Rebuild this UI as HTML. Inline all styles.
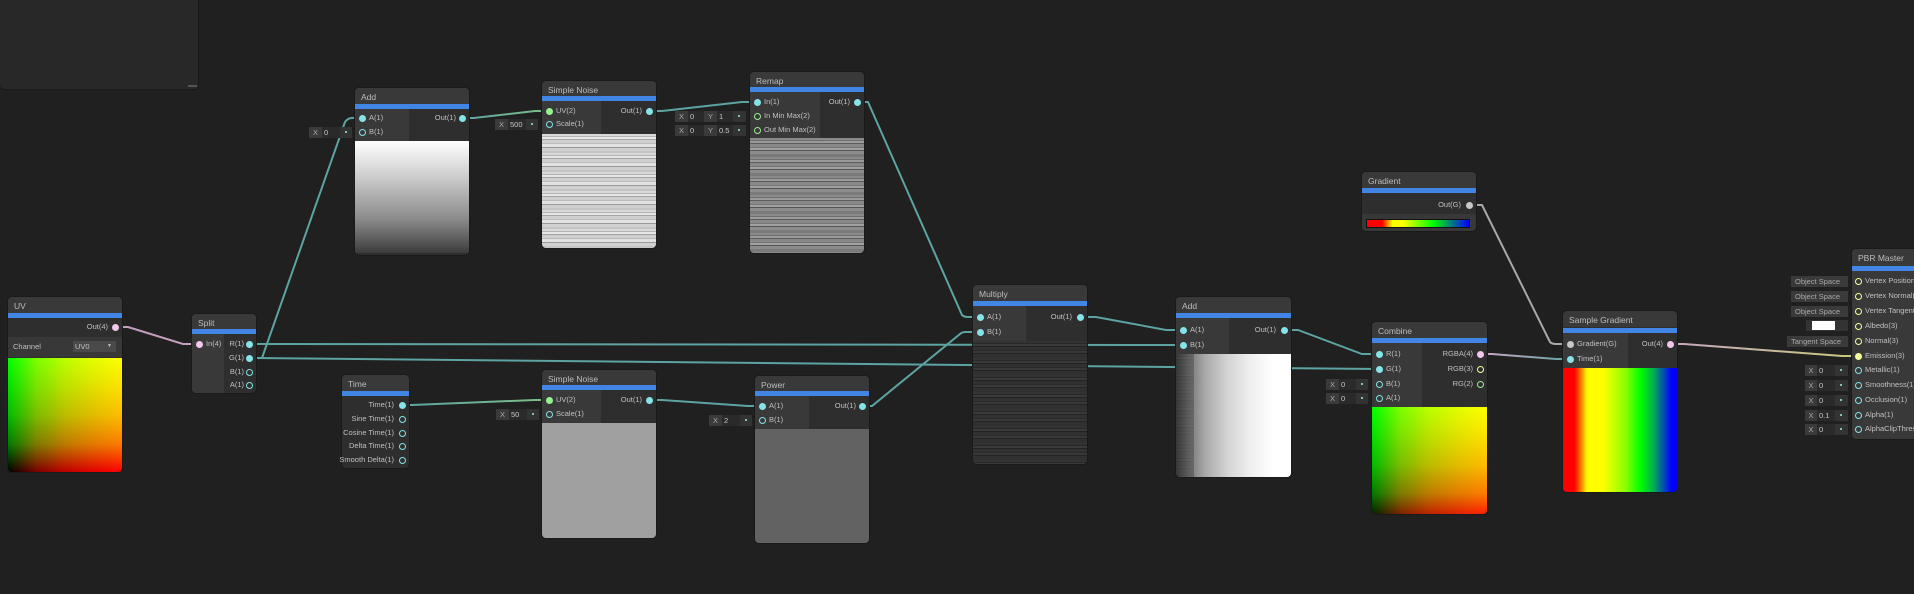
<!DOCTYPE html>
<html><head><meta charset="utf-8"><style>
*{margin:0;padding:0;box-sizing:border-box}
body{width:1914px;height:594px;background:#202020;overflow:hidden;position:relative;font-family:"Liberation Sans",sans-serif;color:#c2c2c2}
.a{position:absolute}
.n{position:absolute;background:#2e2e2e;border-radius:4px;overflow:hidden;box-shadow:0 0 0 1px #1a1a1a}
.h{position:absolute;left:0;right:0;top:0;height:16px;background:#393939;font-size:8.5px;line-height:19px;padding-left:6px;color:#bdbdbd}
.b{position:absolute;left:0;right:0;height:5px;background:#4186e4}
.in{position:absolute;left:0;background:#393939}
.t{position:absolute;font-size:7.5px;line-height:10px;white-space:nowrap;color:#c0c0c0}
.r{text-align:right}
.d{position:absolute;width:7px;height:7px;border-radius:50%}
.ring{background:transparent!important;border:1.6px solid}
.fld{position:absolute;height:11px;background:#2a2a2a;font-size:7.5px;line-height:11px;color:#c8c8c8}
.fx{position:absolute;top:0;height:11px;background:#3a3a3a;text-align:center;color:#aaa}
.fd{position:absolute;top:0;height:11px;background:#333}
.fd:after{content:"";position:absolute;left:5px;top:4px;width:2px;height:2px;border-radius:1px;background:#9ee}
.ns1{background:repeating-linear-gradient(180deg,#d8d8d8 0 2px,#b4b4b4 2px 3px,#e6e6e6 3px 5px,#a4a4a4 5px 6px,#cfcfcf 6px 9px,#bcbcbc 9px 10px,#e2e2e2 10px 13px,#989898 13px 14px,#d0d0d0 14px 17px,#c4c4c4 17px 19px)}
.ns2{background:repeating-linear-gradient(180deg,#8a8a8a 0 2px,#6e6e6e 2px 3px,#9a9a9a 3px 5px,#5c5c5c 5px 6px,#888 6px 9px,#767676 9px 10px,#a0a0a0 10px 12px,#545454 12px 13px,#8c8c8c 13px 16px,#7a7a7a 16px 19px)}
.ns3{background:repeating-linear-gradient(180deg,#333 0 2px,#282828 2px 3px,#3a3a3a 3px 5px,#222 5px 6px,#313131 6px 9px,#2a2a2a 9px 10px,#383838 10px 12px,#242424 12px 13px,#303030 13px 17px)}
.uv{background:linear-gradient(to right,#000,#7c0000 25%,#bc0000 50%,#e10000 75%,#f00),linear-gradient(#00ff00,#00e100 25%,#00bc00 50%,#007c00 75%,#000);background-blend-mode:screen}
</style></head><body>

<div class="a" style="left:0;top:-5px;width:198px;height:94px;background:#282828;border-radius:4px;box-shadow:0 0 0 1px #1a1a1a"></div>
<div class="a" style="left:188px;top:85px;width:9px;height:2px;background:#555"></div>

<svg class="a" style="left:0;top:0" width="1914" height="594" fill="none" stroke-width="2">
<defs>
<linearGradient id="pt" x1="0" x2="1"><stop offset="0" stop-color="#d0a6c8"/><stop offset="1" stop-color="#5ea3a3"/></linearGradient>
<linearGradient id="py" x1="0" x2="1"><stop offset="0" stop-color="#c8a6c0"/><stop offset="1" stop-color="#c9c97a"/></linearGradient>
<linearGradient id="tg" x1="0" x2="1"><stop offset="0" stop-color="#5ea3a3"/><stop offset="1" stop-color="#7cbf84"/></linearGradient>
</defs>
<path d="M115,327 H128 L183,344 H199" stroke="#c49ebd"/>
<path d="M249,358 H262 L345,122 Q348,118 352,118 H362" stroke="#5ea3a3"/>
<path d="M249,344 L1183,345" stroke="#5ea3a3"/>
<path d="M249,358 L1379,369" stroke="#5ea3a3"/>
<path d="M462,118 H474 L535,111 H549" stroke="url(#tg)"/>
<path d="M649,111 H662 L742,102 H757" stroke="#5ea3a3"/>
<path d="M857,102 H868 L962,315 Q964,317 968,317 H980" stroke="#5ea3a3"/>
<path d="M402,405 H412 L535,400 H549" stroke="url(#tg)"/>
<path d="M649,400 H662 L748,406 H762" stroke="#5ea3a3"/>
<path d="M862,406 H872 L960,334 Q962,332 966,332 H980" stroke="#5ea3a3"/>
<path d="M1080,317 H1096 L1166,330 H1183" stroke="#5ea3a3"/>
<path d="M1284,330 H1298 L1362,354 H1379" stroke="#5ea3a3"/>
<path d="M1480,354 H1492 L1556,359 H1570" stroke="url(#pt)"/>
<path d="M1469,205 H1482 L1550,342 Q1552,344 1556,344 H1570" stroke="#a8a8a8"/>
<path d="M1670,344 H1684 L1842,356 H1858" stroke="url(#py)"/>
</svg>

<!-- UV -->
<div class="n" style="left:8px;top:297px;width:114px;height:175px">
<div class="h">UV</div><div class="b" style="top:16px"></div>
<div class="in" style="top:40px;width:114px;height:20px;background:#383838"></div>
<div class="a uv" style="left:0;top:61px;width:114px;height:114px"></div>
</div>
<div class="t r" style="left:60px;top:322px;width:48px">Out(4)</div>
<div class="d" style="left:112px;top:324px;background:#f4c6ee"></div>
<div class="t" style="left:13px;top:342px">Channel</div>
<div class="a" style="left:73px;top:341px;width:43px;height:11px;background:#4a4a4a;font-size:7.5px;line-height:11px;padding-left:2px">UV0<span style="position:absolute;right:4px;font-size:5px">▼</span></div>

<!-- Split -->
<div class="n" style="left:192px;top:314px;width:64px;height:79px">
<div class="h">Split</div><div class="b" style="top:15px"></div>
<div class="in" style="top:20px;width:32px;height:59px"></div>
</div>
<div class="d" style="left:196px;top:341px;background:#f4c6ee"></div>
<div class="t" style="left:206px;top:339px">In(4)</div>
<div class="t r" style="left:220px;top:339px;width:24px">R(1)</div>
<div class="t r" style="left:220px;top:353px;width:24px">G(1)</div>
<div class="t r" style="left:220px;top:367px;width:24px">B(1)</div>
<div class="t r" style="left:220px;top:380px;width:24px">A(1)</div>
<div class="d" style="left:246px;top:341px;background:#84e4e7"></div>
<div class="d" style="left:246px;top:355px;background:#84e4e7"></div>
<div class="d ring" style="left:246px;top:369px;border-color:#84e4e7"></div>
<div class="d ring" style="left:246px;top:382px;border-color:#84e4e7"></div>

<!-- Add1 -->
<div class="n" style="left:355px;top:88px;width:114px;height:167px">
<div class="h">Add</div><div class="b" style="top:16px"></div>
<div class="in" style="top:21px;width:54px;height:32px"></div>
<div class="a" style="left:0;top:53px;width:114px;height:112px;background:linear-gradient(#fff,#d0d0d0 30%,#8a8a8a 70%,#3c3c3c)"></div>
</div>
<div class="d" style="left:359px;top:115px;background:#84e4e7"></div>
<div class="d ring" style="left:359px;top:129px;border-color:#84e4e7"></div>
<div class="t" style="left:369px;top:113px">A(1)</div>
<div class="t" style="left:369px;top:127px">B(1)</div>
<div class="t r" style="left:420px;top:113px;width:36px">Out(1)</div>
<div class="d" style="left:459px;top:115px;background:#84e4e7"></div>
<div class="fld" style="left:309px;top:127px;width:43px"><div class="fx" style="left:0;width:13px">X</div><span style="position:absolute;left:15px">0</span><div class="fd" style="left:31px;width:12px"></div></div>

<!-- Simple Noise 1 -->
<div class="n" style="left:542px;top:81px;width:114px;height:167px">
<div class="h">Simple Noise</div><div class="b" style="top:15px"></div>
<div class="in" style="top:20px;width:59px;height:33px"></div>
<div class="a ns1" style="left:0;top:53px;width:114px;height:114px"></div>
</div>
<div class="d" style="left:546px;top:108px;background:#9aef92"></div>
<div class="d ring" style="left:546px;top:121px;border-color:#84e4e7"></div>
<div class="t" style="left:556px;top:106px">UV(2)</div>
<div class="t" style="left:556px;top:119px">Scale(1)</div>
<div class="t r" style="left:606px;top:106px;width:36px">Out(1)</div>
<div class="d" style="left:646px;top:108px;background:#84e4e7"></div>
<div class="fld" style="left:495px;top:119px;width:43px"><div class="fx" style="left:0;width:13px">X</div><span style="position:absolute;left:15px">500</span><div class="fd" style="left:31px;width:12px"></div></div>

<!-- Remap -->
<div class="n" style="left:750px;top:72px;width:114px;height:181px">
<div class="h">Remap</div><div class="b" style="top:15px"></div>
<div class="in" style="top:20px;width:70px;height:46px"></div>
<div class="a ns2" style="left:0;top:66px;width:114px;height:115px"></div>
</div>
<div class="d" style="left:754px;top:99px;background:#84e4e7"></div>
<div class="d ring" style="left:754px;top:113px;border-color:#9aef92"></div>
<div class="d ring" style="left:754px;top:127px;border-color:#9aef92"></div>
<div class="t" style="left:764px;top:97px">In(1)</div>
<div class="t" style="left:764px;top:111px">In Min Max(2)</div>
<div class="t" style="left:764px;top:125px">Out Min Max(2)</div>
<div class="t r" style="left:814px;top:97px;width:36px">Out(1)</div>
<div class="d" style="left:854px;top:99px;background:#84e4e7"></div>
<div class="fld" style="left:675px;top:111px;width:71px"><div class="fx" style="left:0;width:13px">X</div><span style="position:absolute;left:15px">0</span><div class="fx" style="left:29px;width:13px">Y</div><span style="position:absolute;left:44px">1</span><div class="fd" style="left:58px;width:13px"></div></div>
<div class="fld" style="left:675px;top:125px;width:71px"><div class="fx" style="left:0;width:13px">X</div><span style="position:absolute;left:15px">0</span><div class="fx" style="left:29px;width:13px">Y</div><span style="position:absolute;left:44px">0.5</span><div class="fd" style="left:58px;width:13px"></div></div>

<!-- Time -->
<div class="n" style="left:342px;top:375px;width:67px;height:93px">
<div class="h">Time</div><div class="b" style="top:16px"></div>
</div>
<div class="t r" style="left:326px;top:400px;width:68px">Time(1)</div>
<div class="t r" style="left:326px;top:414px;width:68px">Sine Time(1)</div>
<div class="t r" style="left:326px;top:428px;width:68px">Cosine Time(1)</div>
<div class="t r" style="left:326px;top:441px;width:68px">Delta Time(1)</div>
<div class="t r" style="left:326px;top:455px;width:68px">Smooth Delta(1)</div>
<div class="d" style="left:399px;top:402px;background:#84e4e7"></div>
<div class="d ring" style="left:399px;top:416px;border-color:#84e4e7"></div>
<div class="d ring" style="left:399px;top:430px;border-color:#84e4e7"></div>
<div class="d ring" style="left:399px;top:443px;border-color:#84e4e7"></div>
<div class="d ring" style="left:399px;top:457px;border-color:#84e4e7"></div>

<!-- Simple Noise 2 -->
<div class="n" style="left:542px;top:370px;width:114px;height:168px">
<div class="h">Simple Noise</div><div class="b" style="top:15px"></div>
<div class="in" style="top:20px;width:59px;height:33px"></div>
<div class="a" style="left:0;top:53px;width:114px;height:115px;background:#a0a0a0"></div>
</div>
<div class="d" style="left:546px;top:397px;background:#9aef92"></div>
<div class="d ring" style="left:546px;top:411px;border-color:#84e4e7"></div>
<div class="t" style="left:556px;top:395px">UV(2)</div>
<div class="t" style="left:556px;top:409px">Scale(1)</div>
<div class="t r" style="left:606px;top:395px;width:36px">Out(1)</div>
<div class="d" style="left:646px;top:397px;background:#84e4e7"></div>
<div class="fld" style="left:496px;top:409px;width:43px"><div class="fx" style="left:0;width:13px">X</div><span style="position:absolute;left:15px">50</span><div class="fd" style="left:31px;width:12px"></div></div>

<!-- Power -->
<div class="n" style="left:755px;top:376px;width:114px;height:167px">
<div class="h">Power</div><div class="b" style="top:15px"></div>
<div class="in" style="top:20px;width:54px;height:33px"></div>
<div class="a" style="left:0;top:53px;width:114px;height:114px;background:#626262"></div>
</div>
<div class="d" style="left:759px;top:403px;background:#84e4e7"></div>
<div class="d ring" style="left:759px;top:417px;border-color:#84e4e7"></div>
<div class="t" style="left:769px;top:401px">A(1)</div>
<div class="t" style="left:769px;top:415px">B(1)</div>
<div class="t r" style="left:820px;top:401px;width:36px">Out(1)</div>
<div class="d" style="left:859px;top:403px;background:#84e4e7"></div>
<div class="fld" style="left:709px;top:415px;width:43px"><div class="fx" style="left:0;width:13px">X</div><span style="position:absolute;left:15px">2</span><div class="fd" style="left:31px;width:12px"></div></div>

<!-- Multiply -->
<div class="n" style="left:973px;top:285px;width:114px;height:179px">
<div class="h">Multiply</div><div class="b" style="top:16px"></div>
<div class="in" style="top:21px;width:53px;height:35px"></div>
<div class="a ns3" style="left:0;top:56px;width:114px;height:123px"></div>
</div>
<div class="d" style="left:977px;top:314px;background:#84e4e7"></div>
<div class="d" style="left:977px;top:329px;background:#84e4e7"></div>
<div class="t" style="left:987px;top:312px">A(1)</div>
<div class="t" style="left:987px;top:327px">B(1)</div>
<div class="t r" style="left:1036px;top:312px;width:36px">Out(1)</div>
<div class="d" style="left:1077px;top:314px;background:#84e4e7"></div>

<!-- Add2 -->
<div class="n" style="left:1176px;top:297px;width:115px;height:180px">
<div class="h">Add</div><div class="b" style="top:16px"></div>
<div class="in" style="top:21px;width:53px;height:36px"></div>
<div class="a" style="left:0;top:57px;width:115px;height:123px;background:linear-gradient(to right,#3a3a3a,#707070 10%,#a8a8a8 25%,#d4d4d4 45%,#efefef 65%,#fff 85%)"></div>
<div class="a ns3" style="left:0;top:57px;width:18px;height:123px;opacity:.35"></div>
</div>
<div class="d" style="left:1180px;top:327px;background:#84e4e7"></div>
<div class="d" style="left:1180px;top:342px;background:#84e4e7"></div>
<div class="t" style="left:1190px;top:325px">A(1)</div>
<div class="t" style="left:1190px;top:340px">B(1)</div>
<div class="t r" style="left:1240px;top:325px;width:36px">Out(1)</div>
<div class="d" style="left:1281px;top:327px;background:#84e4e7"></div>

<!-- Combine -->
<div class="n" style="left:1372px;top:322px;width:115px;height:192px">
<div class="h">Combine</div><div class="b" style="top:16px"></div>
<div class="in" style="top:21px;width:50px;height:64px"></div>
<div class="a uv" style="left:0;top:85px;width:115px;height:115px"></div>
</div>
<div class="d" style="left:1376px;top:351px;background:#84e4e7"></div>
<div class="d" style="left:1376px;top:366px;background:#84e4e7"></div>
<div class="d ring" style="left:1376px;top:381px;border-color:#84e4e7"></div>
<div class="d ring" style="left:1376px;top:395px;border-color:#84e4e7"></div>
<div class="t" style="left:1386px;top:349px">R(1)</div>
<div class="t" style="left:1386px;top:364px">G(1)</div>
<div class="t" style="left:1386px;top:379px">B(1)</div>
<div class="t" style="left:1386px;top:393px">A(1)</div>
<div class="t r" style="left:1430px;top:349px;width:43px">RGBA(4)</div>
<div class="t r" style="left:1430px;top:364px;width:43px">RGB(3)</div>
<div class="t r" style="left:1430px;top:379px;width:43px">RG(2)</div>
<div class="d" style="left:1477px;top:351px;background:#f4c6ee"></div>
<div class="d ring" style="left:1477px;top:366px;border-color:#f6ff9a"></div>
<div class="d ring" style="left:1477px;top:381px;border-color:#9aef92"></div>
<div class="fld" style="left:1326px;top:379px;width:42px"><div class="fx" style="left:0;width:13px">X</div><span style="position:absolute;left:15px">0</span><div class="fd" style="left:30px;width:12px"></div></div>
<div class="fld" style="left:1326px;top:393px;width:42px"><div class="fx" style="left:0;width:13px">X</div><span style="position:absolute;left:15px">0</span><div class="fd" style="left:30px;width:12px"></div></div>

<!-- Gradient -->
<div class="n" style="left:1362px;top:172px;width:114px;height:59px">
<div class="h">Gradient</div><div class="b" style="top:16px"></div>
<div class="in" style="top:42px;width:114px;height:17px;background:#383838"></div>
<div class="a" style="left:4px;top:47px;width:104px;height:9px;border:1px solid #111;background:linear-gradient(to right,#f00 0,#f00 15%,#ff0 25%,#ff0 35%,#0f0 65%,#00f 100%)"></div>
</div>
<div class="t r" style="left:1420px;top:200px;width:41px">Out(G)</div>
<div class="d" style="left:1466px;top:202px;background:#c8c8c8"></div>

<!-- Sample Gradient -->
<div class="n" style="left:1563px;top:311px;width:114px;height:181px">
<div class="h">Sample Gradient</div><div class="b" style="top:17px"></div>
<div class="in" style="top:22px;width:65px;height:35px"></div>
<div class="a" style="left:0;top:57px;width:114px;height:124px;background:linear-gradient(to right,#f00 0,#f00 10%,#ff8000 16%,#ff0 21%,#ff0 35%,#8f0 55%,#0f0 68%,#0a5 80%,#00f 95%,#00f)"></div>
</div>
<div class="d" style="left:1567px;top:341px;background:#c8c8c8"></div>
<div class="d" style="left:1567px;top:356px;background:#84e4e7"></div>
<div class="t" style="left:1577px;top:339px">Gradient(G)</div>
<div class="t" style="left:1577px;top:354px">Time(1)</div>
<div class="t r" style="left:1620px;top:339px;width:43px">Out(4)</div>
<div class="d" style="left:1667px;top:341px;background:#f4c6ee"></div>

<!-- PBR Master -->
<div class="n" style="left:1852px;top:249px;width:80px;height:190px;background:#393939">
<div class="h" style="height:17px">PBR Master</div><div class="b" style="top:17px"></div>
</div>
<div class="t" style="left:1865px;top:276px">Vertex Position(3)</div>
<div class="t" style="left:1865px;top:291px">Vertex Normal(3)</div>
<div class="t" style="left:1865px;top:306px">Vertex Tangent(3)</div>
<div class="t" style="left:1865px;top:321px">Albedo(3)</div>
<div class="t" style="left:1865px;top:336px">Normal(3)</div>
<div class="t" style="left:1865px;top:351px">Emission(3)</div>
<div class="t" style="left:1865px;top:365px">Metallic(1)</div>
<div class="t" style="left:1865px;top:380px">Smoothness(1)</div>
<div class="t" style="left:1865px;top:395px">Occlusion(1)</div>
<div class="t" style="left:1865px;top:410px">Alpha(1)</div>
<div class="t" style="left:1865px;top:424px">AlphaClipThreshold(1)</div>
<div class="d ring" style="left:1855px;top:278px;border-color:#f6ff9a"></div>
<div class="d ring" style="left:1855px;top:293px;border-color:#f6ff9a"></div>
<div class="d ring" style="left:1855px;top:308px;border-color:#f6ff9a"></div>
<div class="d ring" style="left:1855px;top:323px;border-color:#f6ff9a"></div>
<div class="d ring" style="left:1855px;top:338px;border-color:#f6ff9a"></div>
<div class="d" style="left:1855px;top:353px;background:#f6ff9a"></div>
<div class="d ring" style="left:1855px;top:367px;border-color:#84e4e7"></div>
<div class="d ring" style="left:1855px;top:382px;border-color:#84e4e7"></div>
<div class="d ring" style="left:1855px;top:397px;border-color:#84e4e7"></div>
<div class="d ring" style="left:1855px;top:412px;border-color:#84e4e7"></div>
<div class="d ring" style="left:1855px;top:426px;border-color:#84e4e7"></div>
<div class="fld" style="left:1791px;top:276px;width:57px;background:#3a3a3a;color:#aaa;padding-left:4px">Object Space</div>
<div class="fld" style="left:1791px;top:291px;width:57px;background:#3a3a3a;color:#aaa;padding-left:4px">Object Space</div>
<div class="fld" style="left:1791px;top:306px;width:57px;background:#3a3a3a;color:#aaa;padding-left:4px">Object Space</div>
<div class="fld" style="left:1806px;top:320px;width:42px;background:#333"><div class="a" style="left:6px;top:1px;width:23px;height:9px;background:#fff"></div></div>
<div class="fld" style="left:1787px;top:336px;width:61px;background:#3a3a3a;color:#aaa;padding-left:4px">Tangent Space</div>
<div class="fld" style="left:1805px;top:365px;width:43px"><div class="fx" style="left:0;width:12px">X</div><span style="position:absolute;left:14px">0</span><div class="fd" style="left:30px;width:13px"></div></div>
<div class="fld" style="left:1805px;top:380px;width:43px"><div class="fx" style="left:0;width:12px">X</div><span style="position:absolute;left:14px">0</span><div class="fd" style="left:30px;width:13px"></div></div>
<div class="fld" style="left:1805px;top:395px;width:43px"><div class="fx" style="left:0;width:12px">X</div><span style="position:absolute;left:14px">0</span><div class="fd" style="left:30px;width:13px"></div></div>
<div class="fld" style="left:1805px;top:410px;width:43px"><div class="fx" style="left:0;width:12px">X</div><span style="position:absolute;left:14px">0.1</span><div class="fd" style="left:30px;width:13px"></div></div>
<div class="fld" style="left:1805px;top:424px;width:43px"><div class="fx" style="left:0;width:12px">X</div><span style="position:absolute;left:14px">0</span><div class="fd" style="left:30px;width:13px"></div></div>
</body></html>
